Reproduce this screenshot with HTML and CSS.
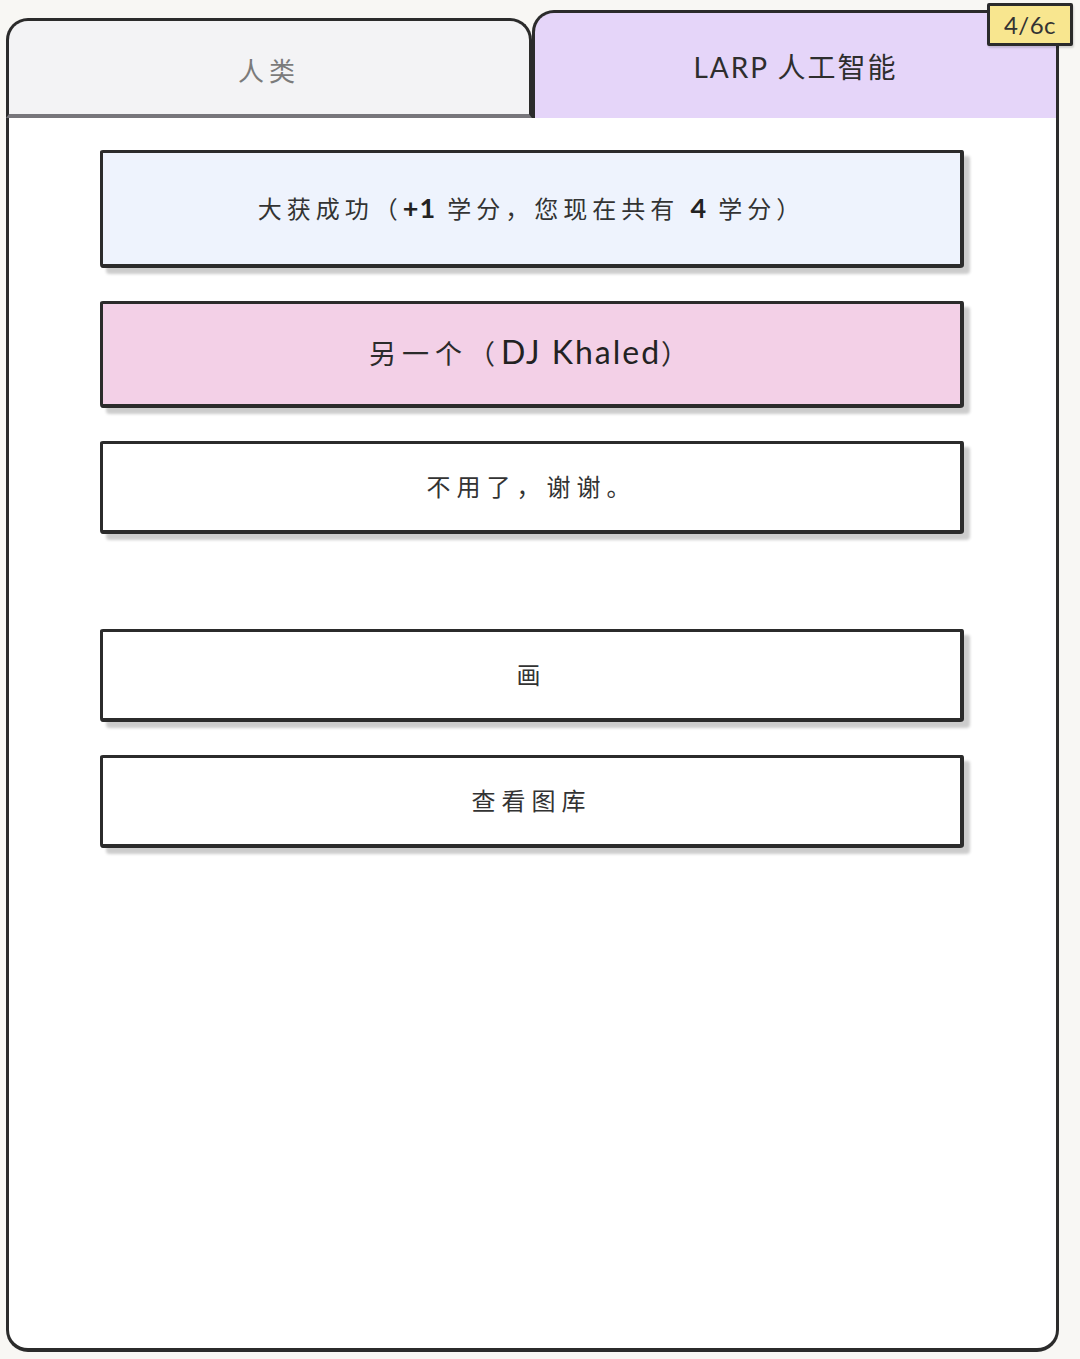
FILE: index.html
```html
<!DOCTYPE html>
<html lang="zh-CN">
<head>
<meta charset="utf-8">
<title>LARP 人工智能</title>
<link rel="stylesheet" href="styles.css">
</head>
<body>
  <div class="app">
    <div class="tabs">
      <div class="tab tab-idle">人类</div>
      <div class="tab tab-active">
        LARP 人工智能
        <span class="badge">4/6c</span>
      </div>
    </div>
    <div class="panel">
      <div class="group">
        <button class="btn btn-result">大获成功（<span class="num">+1</span> 学分，您现在共有 <span class="num">4</span> 学分）</button>
        <button class="btn btn-again">另一个（<span class="name">DJ Khaled</span>）</button>
        <button class="btn">不用了，谢谢。</button>
      </div>
      <div class="group">
        <button class="btn">画</button>
        <button class="btn">查看图库</button>
      </div>
    </div>
  </div>
</body>
</html>
```

FILE: styles.css
```css
* {
  box-sizing: border-box;
}

body {
  margin: 0;
  background: #f8f7f4;
  font-family: Lato, "Noto Sans CJK SC", sans-serif;
  color: #2e2e2e;
}

.app {
  width: 1053px;
  margin-left: 6px;
  padding-top: 10px;
}

/* tab strip */
.tabs {
  display: flex;
  align-items: flex-end;
  height: 108px;
}

.tab {
  position: relative;
  display: flex;
  align-items: center;
  justify-content: center;
  border: 3px solid #2b2b2b;
  border-radius: 22px 22px 0 0;
}

.tab-idle {
  width: 526px;
  height: 100px;
  background: #f3f3f5;
  border-bottom: 4px solid #77767b;
  color: #7b7b7b;
  font-size: 26px;
  letter-spacing: 5px;
  padding-top: 4px;
}

.tab-active {
  width: 527px;
  height: 108px;
  background: #e5d5f9;
  border-bottom: none;
  font-size: 28px;
  letter-spacing: 2px;
  padding-top: 0;
}

.badge {
  position: absolute;
  top: -10px;
  right: -17px;
  width: 86px;
  height: 43px;
  display: flex;
  align-items: center;
  justify-content: center;
  background: #f8e68f;
  border: 3px solid #2b2b2b;
  border-radius: 2px;
  font-size: 24px;
  letter-spacing: 0.5px;
  color: #333;
  box-shadow: 1px 2px 2px rgba(0, 0, 0, 0.15);
}

/* main card */
.panel {
  height: 1234px;
  background: #ffffff;
  border: 3px solid #2b2b2b;
  border-top: none;
  border-bottom-width: 4px;
  border-radius: 0 0 22px 22px;
  padding: 32px 0 0 91px;
  display: flex;
  flex-direction: column;
  gap: 95px;
}

.group {
  display: flex;
  flex-direction: column;
  gap: 33px;
}

.btn {
  width: 864px;
  padding: 28px 0;
  background: #ffffff;
  border: 3px solid #2b2b2b;
  border-right-width: 4px;
  border-bottom-width: 4px;
  border-radius: 3px 2px 4px 3px / 2px 3px 3px 4px;
  box-shadow: 6px 6px 3px rgba(0, 0, 0, 0.2);
  font-family: Lato, "Noto Sans CJK SC", sans-serif;
  font-size: 24px;
  line-height: 30px;
  letter-spacing: 6px;
  color: #333;
  text-align: center;
  cursor: pointer;
}

.btn-result {
  background: #eef3fd;
  padding: 40px 0;
  line-height: 31px;
  letter-spacing: 5px;
}

.btn-result .num {
  font-size: 27px;
  font-weight: 700;
  line-height: 1;
  letter-spacing: 1px;
  color: #222;
}

.btn-again {
  background: #f3d0e7;
  padding: 30px 0;
  line-height: 40px;
  font-size: 27px;
  letter-spacing: 6px;
  color: #2b2b2b;
}

.btn-again .name {
  font-size: 32px;
  line-height: 1;
  letter-spacing: 2px;
  color: #222;
}
```
